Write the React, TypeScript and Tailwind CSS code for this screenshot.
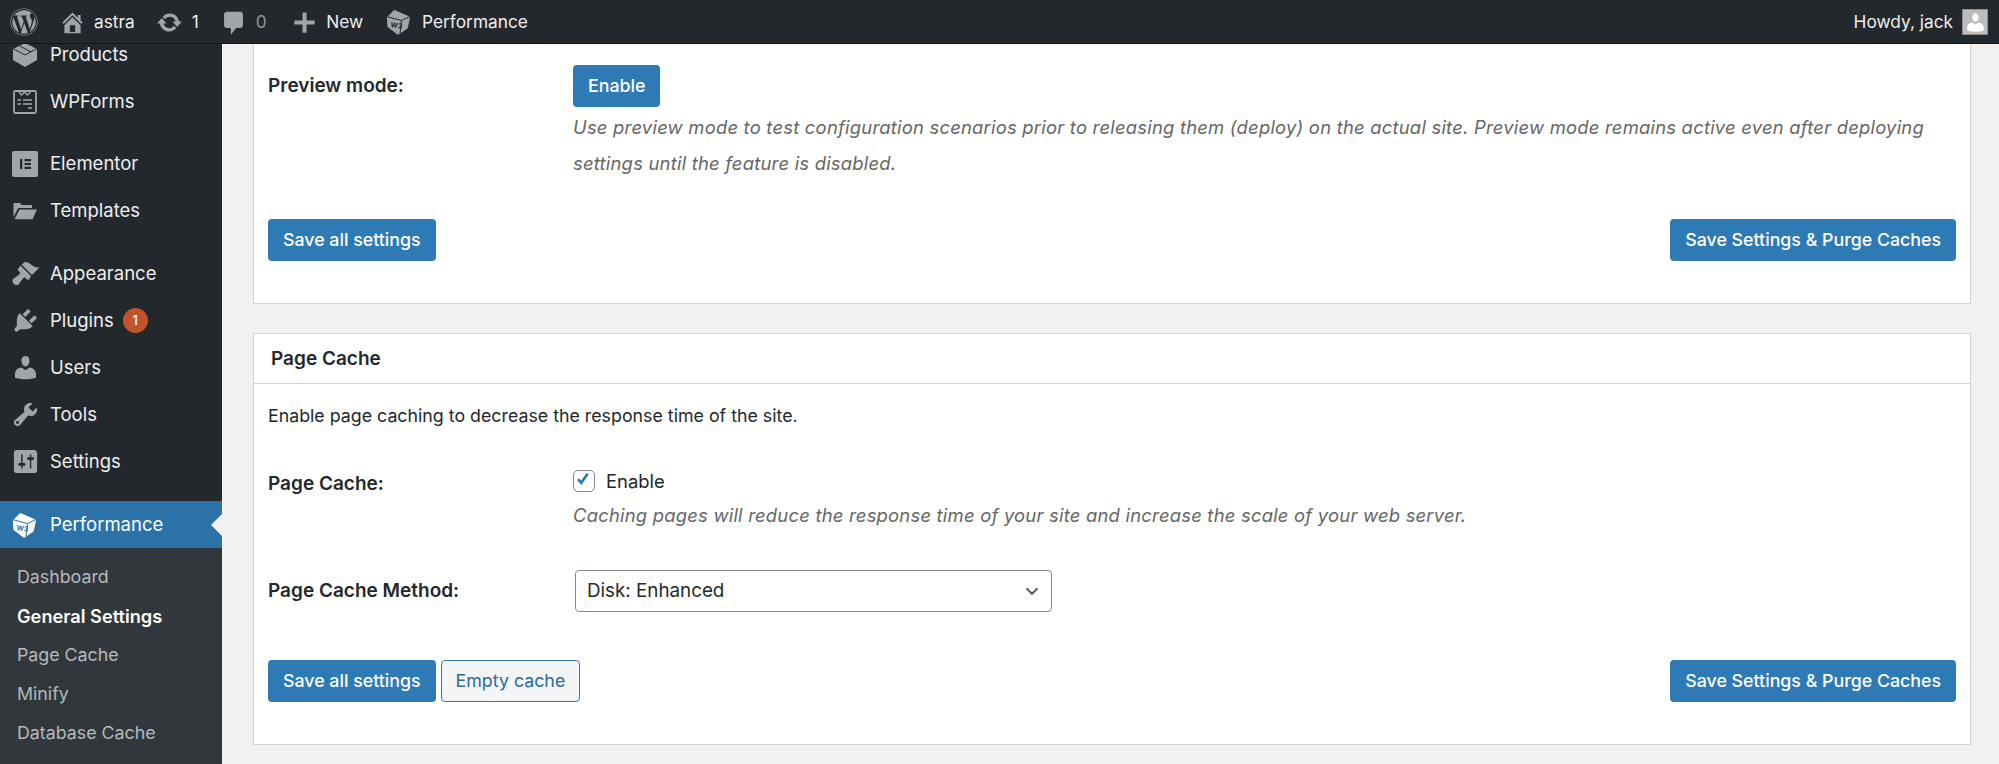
import { FaWordpress } from "react-icons/fa";

const ICONS: Record<string, string> = {
  home: "M16 8.5l1.53 1.53-1.06 1.06L10 4.62l-6.47 6.47-1.06-1.06L10 2.5l4 4v-2h2v4zm-6-2.46l6 5.99V18H4v-5.97zM12 17v-5H8v5h4z",
  update:
    "M10.2 3.28c3.53 0 6.43 2.61 6.92 6h2.08l-3.5 4-3.5-4h2.32c-.45-1.97-2.21-3.45-4.32-3.45-1.45 0-2.73.71-3.54 1.78L4.95 5.66C6.23 4.2 8.11 3.28 10.2 3.28zm-.4 13.44c-3.52 0-6.43-2.61-6.92-6H.8l3.5-4c1.17 1.33 2.33 2.67 3.5 4H5.48c.45 1.97 2.21 3.45 4.32 3.45 1.45 0 2.73-.71 3.54-1.78l1.71 1.95c-1.28 1.46-3.15 2.38-5.25 2.38z",
  comment: "M5 2h10c1.1 0 2 .9 2 2v8c0 1.1-.9 2-2 2h-3l-4 5v-5H5c-1.1 0-2-.9-2-2V4c0-1.1.9-2 2-2z",
  plus: "M17.5 8.5v3h-6v6h-3v-6h-6v-3h6v-6h3v6h6z",
  appearance:
    "M14.48 11.06L7.41 3.99l1.5-1.5c.5-.56 2.3-.47 3.51.32 1.21.8 1.43 1.28 2.91 2.1 1.18.64 2.45 1.26 4.45.85zm-.71.71L6.7 4.7 4.93 6.47c-.39.39-.39 1.02 0 1.41l1.06 1.06c.39.39.39 1.03 0 1.42-.6.6-1.43 1.11-2.21 1.69-.35.26-.7.53-1.01.84C1.43 13.25 1 14.25 1 15c0 1.66 1.34 3 3 3 .75 0 1.76-.43 2.09-1.76.31-.31.58-.66.84-1.01.58-.78 1.09-1.61 1.69-2.21.39-.39 1.03-.39 1.42 0l1.06 1.06c.39.39 1.02.39 1.41 0z",
  plugins:
    "M13.11 4.36L9.87 7.6 8 5.73l3.24-3.24c.35-.34 1.05-.2 1.56.32.52.51.66 1.21.31 1.55zm-8 1.77l.91-1.12 9.01 9.01-1.19.84c-.71.71-2.63 1.16-3.82 1.16H6.14L4.9 17.26c-.59.59-1.54.59-2.12 0-.59-.58-.59-1.53 0-2.12l1.24-1.24v-3.88c0-1.13.4-3.19 1.09-3.89zm7.26 3.97l3.24-3.24c.34-.35 1.04-.21 1.55.31.52.51.66 1.21.31 1.55l-3.24 3.25z",
  users:
    "M10 9.25c-2.27 0-2.73-3.44-2.73-3.44C7 4.02 7.82 2 9.97 2c2.16 0 2.98 2.02 2.71 3.81 0 0-.41 3.44-2.68 3.44zm0 2.57L12.72 10c2.39 0 4.52 2.33 4.52 4.53v2.49s-3.65 1.13-7.24 1.13c-3.65 0-7.24-1.13-7.24-1.13v-2.49c0-2.25 1.94-4.48 4.47-4.48z",
  tools:
    "M16.68 9.77c-1.34 1.34-3.3 1.67-4.95.99l-5.41 6.52c-.99.99-2.59.99-3.58 0s-.99-2.59 0-3.57l6.52-5.42c-.68-1.65-.35-3.61.99-4.95 1.28-1.28 3.12-1.62 4.72-1.06l-2.89 2.89 2.82 2.82 2.86-2.87c.53 1.58.18 3.39-1.08 4.65zM3.81 16.21c.4.39 1.04.39 1.43 0 .4-.4.4-1.04 0-1.43-.39-.4-1.03-.4-1.43 0-.39.39-.39 1.03 0 1.43z",
  settings:
    "M18 16V4c0-1.1-.9-2-2-2H4c-1.1 0-2 .9-2 2v12c0 1.1.9 2 2 2h12c1.1 0 2-.9 2-2zM8 11h1c.55 0 1 .45 1 1s-.45 1-1 1H8v1.5c0 .28-.22.5-.5.5s-.5-.22-.5-.5V13H6c-.55 0-1-.45-1-1s.45-1 1-1h1V5.5c0-.28.22-.5.5-.5s.5.22.5.5V11zm5-2h-1c-.55 0-1-.45-1-1s.45-1 1-1h1V5.5c0-.28.22-.5.5-.5s.5.22.5.5V7h1c.55 0 1 .45 1 1s-.45 1-1 1h-1v5.5c0 .28-.22.5-.5.5s-.5-.22-.5-.5V9z",
};

function Dash({ name, className }: { name: string; className: string }) {
  return (
    <svg viewBox="0 0 20 20" fill="currentColor" fillRule="evenodd" className={className}>
      <path d={ICONS[name]} />
    </svg>
  );
}

// W3 Total Cache cube, not a dashicon
function Cube({ color, bg, className }: { color: string; bg: string; className: string }) {
  return (
    <svg viewBox="0 0 24 26" className={className}>
      <path
        d="M6.5 1.5c.5-.4 1-.5 1.6-.2l13.8 5.9c.8.4 1.2 1.1 1 1.9l-2 9.3c-.1.5-.4 1-.8 1.3l-8 5.6c-.5.4-1.2.4-1.7.1L1.3 18.600c-.6-.4-1-1-1-1.700L0 9.300c0-.7.3-1.300.8-1.700z"
        fill={color}
      />
      <path d="M1 8l13.500 3.500 8.500-4M14.500 11.500L13 24.500" fill="none" stroke={bg} strokeWidth="1" />
      <text x="3.600" y="18.500" fontSize="7" fontWeight="700" fill={bg} transform="rotate(8 7 16)">
        W3
      </text>
    </svg>
  );
}

function ProductsIcon() {
  return (
    <svg viewBox="0 0 24 24" className="ml-[13px] mr-[13px] w-[24px] h-[24px] shrink-0">
      <path d="M12 0l12 6v11l-12 7-12-7V6z" fill="#a0a5aa" />
      <path d="M0 5.500l12 6.500 12-6.500M6 2.500l12 6.500" fill="none" stroke="#23282d" strokeWidth="1" />
    </svg>
  );
}

function FormsIcon() {
  return (
    <svg viewBox="0 0 24 24" className="ml-[13px] mr-[13px] w-[24px] h-[24px] shrink-0 fill-none stroke-[#a0a5aa]">
      <rect x="1" y="1" width="22" height="22" rx="1.500" strokeWidth="1.800" />
      <path d="M6 2l2.500 3 3-3 3 3 3-3" strokeWidth="1.400" />
      <path d="M4.500 10h3.500M4.500 14h3.500M10 10h9M10 14h9M15 18h4" strokeWidth="1.600" />
    </svg>
  );
}

function ElementorIcon() {
  return (
    <svg viewBox="0 0 26 26" className="ml-[12px] mr-[12px] w-[26px] h-[26px] shrink-0">
      <rect width="26" height="26" rx="2" fill="#a0a5aa" />
      <path d="M8 8h2.200v10H8zM12.500 8H19v2.200h-6.500zM12.500 11.900H19v2.200h-6.500zM12.500 15.800H19V18h-6.500z" fill="#23282d" />
    </svg>
  );
}

function FolderIcon() {
  return (
    <svg viewBox="0 0 24 18" className="ml-[13px] mr-[13px] w-[24px] h-[18px] shrink-0 fill-[#a0a5aa]">
      <path d="M.5 2c0-.6.4-1 1-1h5.300l2 2H18c.6 0 1 .4 1 1v2H6.500c-1 0-1.600.4-2 1.200L.5 15z" />
      <path d="M6.500 7.500H24l-4.500 9.800H1.500z" />
    </svg>
  );
}

function BarItem({ icon, label, dim }: { icon: string; label: string; dim?: boolean }) {
  return (
    <div className="flex items-center gap-[8.5px]">
      <Dash name={icon} className="w-[27px] h-[27px] text-[#a0a5aa]" />
      <span className={dim ? "text-[#8f9499]" : "text-[#eeeeee]"}>{label}</span>
    </div>
  );
}

function AdminBar() {
  return (
    <div className="relative z-10 flex h-[44px] shrink-0 items-center justify-between bg-[#23282d] border-b border-[#14171a] pl-[10px] pr-[11px] pt-[1px] text-[17.3px]">
      <div className="flex items-center">
        <FaWordpress className="w-[28px] h-[28px] text-[#a0a5aa] mr-[20.5px]" />
        <BarItem icon="home" label="astra" />
        <div className="ml-[21.5px]">
          <BarItem icon="update" label="1" />
        </div>
        <div className="ml-[21.5px]">
          <BarItem icon="comment" label="0" dim />
        </div>
        <div className="ml-[24px]">
          <BarItem icon="plus" label="New" />
        </div>
        <div className="ml-[24px] flex items-center gap-[11px] text-[#eeeeee]">
          <Cube color="#a0a5aa" bg="#23282d" className="w-[24px] h-[26px]" />
          <span>Performance</span>
        </div>
      </div>
      <div className="flex items-center gap-[9px] text-[#eeeeee]">
        <span>Howdy, jack</span>
        <div className="flex h-[26px] w-[26px] items-end justify-center overflow-hidden border border-[#8f8f8f] bg-[#bcbcbc]">
          <Dash name="users" className="w-[23px] h-[23px] text-white" />
        </div>
      </div>
    </div>
  );
}

function MenuItem({
  icon,
  custom,
  label,
  badge,
}: {
  icon?: string;
  custom?: React.ReactNode;
  label: string;
  badge?: string;
}) {
  return (
    <div className="flex h-[47px] items-center text-[#eeeeee]">
      {custom ?? <Dash name={icon!} className="ml-[10.5px] mr-[10.5px] w-[29px] h-[29px] shrink-0 text-[#a0a5aa]" />}
      <span>{label}</span>
      {badge && (
        <span className="ml-[9px] flex h-[25px] w-[25px] items-center justify-center rounded-full bg-[#c2532b] text-[13px] font-medium text-white">
          {badge}
        </span>
      )}
    </div>
  );
}

function Sidebar() {
  return (
    <aside className="w-[222px] shrink-0 overflow-hidden bg-[#23282d] text-[18.5px]">
      <div className="-mt-[13px]">
        <MenuItem custom={<ProductsIcon />} label="Products" />
        <MenuItem custom={<FormsIcon />} label="WPForms" />
        <div className="h-[15px]" />
        <MenuItem custom={<ElementorIcon />} label="Elementor" />
        <MenuItem custom={<FolderIcon />} label="Templates" />
        <div className="h-[16px]" />
        <MenuItem icon="appearance" label="Appearance" />
        <MenuItem icon="plugins" label="Plugins" badge="1" />
        <MenuItem icon="users" label="Users" />
        <MenuItem icon="tools" label="Tools" />
        <MenuItem icon="settings" label="Settings" />
        <div className="h-[16px]" />
        <div className="relative flex h-[47px] items-center bg-[#2a72a8] text-white">
          <Cube color="#ffffff" bg="#2a72a8" className="ml-[13px] mr-[13px] w-[24px] h-[26px]" />
          <span>Performance</span>
          <span className="absolute right-0 top-[13px] border-y-[11px] border-r-[11px] border-y-transparent border-r-[#f1f1f1]" />
        </div>
        <div className="bg-[#32373c] pt-[10px] pb-[40px] text-[17.8px] text-[#b4b9be]">
          <div className="flex h-[39px] items-center pl-[17px]">Dashboard</div>
          <div className="flex h-[39px] items-center pl-[17px] font-semibold text-[18.2px] text-white">General Settings</div>
          <div className="flex h-[39px] items-center pl-[17px]">Page Cache</div>
          <div className="flex h-[39px] items-center pl-[17px]">Minify</div>
          <div className="flex h-[39px] items-center pl-[17px]">Database Cache</div>
        </div>
      </div>
    </aside>
  );
}

function Btn({ children }: { children: string }) {
  return (
    <button className="h-[42px] rounded-[4px] bg-[#2e7ab5] px-[15px] font-medium text-white">{children}</button>
  );
}

function ButtonRow({ extra }: { extra?: string }) {
  return (
    <div className="flex justify-between">
      <div className="flex gap-[5px]">
        <Btn>Save all settings</Btn>
        {extra && (
          <button className="h-[42px] rounded-[4px] border border-[#2e7ab5] bg-[#f3f5f6] px-[14px] text-[#2b6a9b]">
            {extra}
          </button>
        )}
      </div>
      <Btn>Save Settings &amp; Purge Caches</Btn>
    </div>
  );
}

const descClass = "text-[18.4px] tracking-[0.23px] text-[#666666] italic";

export default function App() {
  return (
    <div
      className="flex h-[764px] flex-col overflow-hidden bg-[#f1f1f1] text-[17.8px] text-[#23282d]"
      style={{ fontFamily: "Inter, 'Noto Sans', sans-serif" }}
    >
      <AdminBar />
      <div className="flex min-h-0 flex-1">
        <Sidebar />
        <main className="flex-1 pl-[31px] pr-[28px]">
          <section className="h-[260px] border-x border-b border-[#cfd3d7] bg-white px-[14px] pt-[21px]">
            <div className="grid grid-cols-[305px_1fr]">
              <div className="pt-[7px] text-[19px] font-semibold">Preview mode:</div>
              <div>
                <Btn>Enable</Btn>
                <p className={`mt-[2px] leading-[36px] ${descClass}`}>
                  Use preview mode to test configuration scenarios prior to releasing them (deploy) on the actual site.
                  Preview mode remains active even after deploying settings until the feature is disabled.
                </p>
              </div>
            </div>
            <div className="mt-[38px]">
              <ButtonRow />
            </div>
          </section>

          <section className="mt-[29px] h-[412px] border border-[#cfd3d7] bg-white">
            <h2 className="flex h-[50px] items-center border-b border-[#cfd3d7] pl-[17px] pt-[2px] text-[19px] font-semibold">
              Page Cache
            </h2>
            <div className="px-[14px]">
              <p className="mt-[19px]">Enable page caching to decrease the response time of the site.</p>
              <div className="mt-[38px] grid grid-cols-[305px_1fr]">
                <div className="pt-[2px] text-[19px] font-semibold">Page Cache:</div>
                <div>
                  <label className="flex items-center gap-[11px] text-[18.4px]">
                    <span className="flex h-[22px] w-[22px] items-center justify-center rounded-[5px] border border-[#7e8993] bg-white">
                      <svg viewBox="0 0 22 22" className="w-[22px] h-[22px] fill-none stroke-[#2e7ab5] stroke-[3]">
                        <path d="M4.500 9l3.500 4 7-10" />
                      </svg>
                    </span>
                    <span>Enable</span>
                  </label>
                  <p className={`mt-[8px] leading-[24px] ${descClass}`}>
                    Caching pages will reduce the response time of your site and increase the scale of your web server.
                  </p>
                </div>
              </div>
              <div className="mt-[43px] grid grid-cols-[305px_1fr] items-center">
                <div className="text-[19px] font-semibold">Page Cache Method:</div>
                <div className="ml-[2px] flex h-[42px] w-[477px] items-center justify-between rounded-[4px] border border-[#7e8993] pl-[11px] pr-[11px] text-[18.8px]">
                  <span>Disk: Enhanced</span>
                  <svg viewBox="0 0 20 20" className="w-[16px] h-[16px] fill-none stroke-[#555d66] stroke-[2.5]">
                    <path d="M3 6.500l7 7 7-7" />
                  </svg>
                </div>
              </div>
              <div className="mt-[48px]">
                <ButtonRow extra="Empty cache" />
              </div>
            </div>
          </section>
        </main>
      </div>
    </div>
  );
}
